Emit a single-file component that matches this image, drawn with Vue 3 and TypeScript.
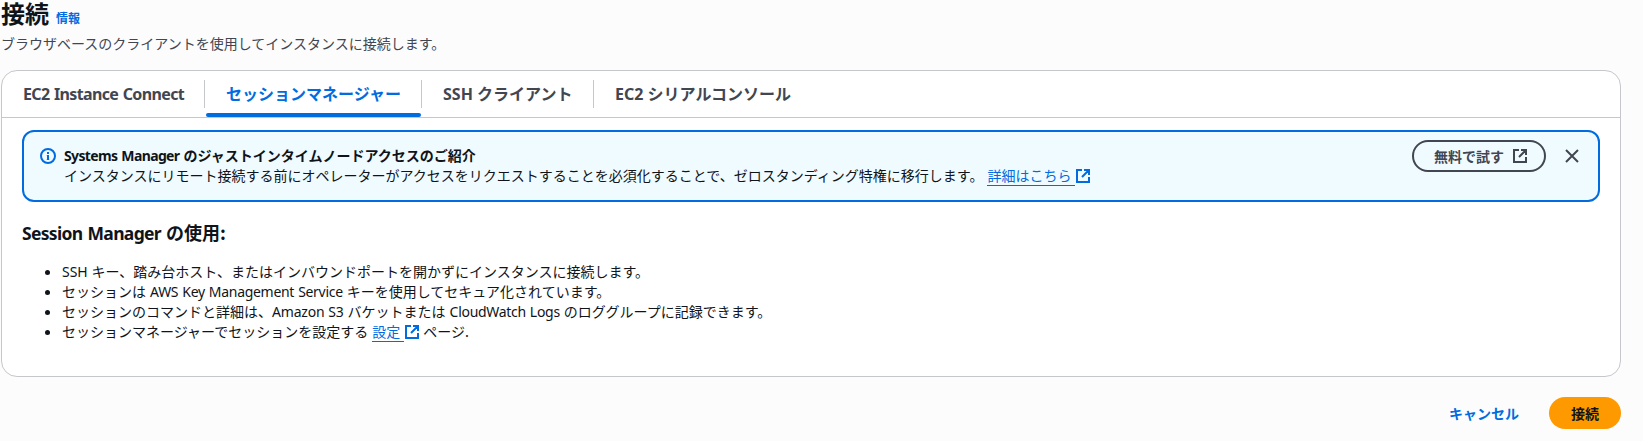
<script setup lang="ts">
import { ref } from 'vue'

interface Run { text: string; latin?: string }
interface Tab { id: string; runs: Run[] }

const tabs: Tab[] = [
  { id: 'eic', runs: [{ text: 'EC2 Instance Connect', latin: 'latin tight' }] },
  { id: 'ssm', runs: [{ text: 'セッションマネージャー' }] },
  { id: 'ssh', runs: [{ text: 'SSH ', latin: 'latin' }, { text: 'クライアント' }] },
  { id: 'serial', runs: [{ text: 'EC2 ', latin: 'latin' }, { text: 'シリアルコンソール' }] },
]
const active = ref('ssm')

const features: Run[][] = [
  [{ text: 'SSH ', latin: 'latin' }, { text: 'キー、踏み台ホスト、またはインバウンドポートを開かずにインスタンスに接続します。' }],
  [{ text: 'セッションは' }, { text: ' AWS Key Management Service ', latin: 'latin snug' }, { text: 'キーを使用してセキュア化されています。' }],
  [{ text: 'セッションのコマンドと詳細は、' }, { text: 'Amazon S3 ', latin: 'latin near' }, { text: 'バケットまたは' }, { text: ' CloudWatch Logs ', latin: 'latin snug' }, { text: 'のロググループに記録できます。' }],
]
</script>

<template>
  <main class="page">
    <header class="header">
      <div class="title-row">
        <h1>接続</h1>
        <a class="info">情報</a>
      </div>
      <p class="desc">ブラウザベースのクライアントを使用してインスタンスに接続します。</p>
    </header>

    <section class="panel">
      <nav class="tabs">
        <button v-for="t in tabs" :key="t.id" class="tab" :class="[t.id, { active: active === t.id }]" @click="active = t.id">
          <span class="tab-label"><span v-for="(r, i) in t.runs" :key="i" :class="r.latin">{{ r.text }}</span></span>
        </button>
      </nav>

      <div class="content">
        <div class="alert">
          <svg class="info-icon" viewBox="0 0 16 16">
            <circle cx="8" cy="8" r="7" />
            <path d="M8 12V7M8 4v2" />
            <path class="serif" d="M6.8 7.5H8M6.8 11.5h2.4" />
          </svg>
          <div class="alert-text">
            <strong><span class="latin tight">Systems Manager </span>のジャストインタイムノードアクセスのご紹介</strong>
            <p>インスタンスにリモート接続する前にオペレーターがアクセスをリクエストすることを必須化することで、ゼロスタンディング特権に移行します。<a class="link more">詳細はこちら</a><svg class="ext" viewBox="0 0 16 16"><path d="M14 9v5H2V2h5M9 2h5v5M7 9l6.5-6.5" /></svg></p>
          </div>
          <button class="try">無料で試す<svg class="ext" viewBox="0 0 16 16"><path d="M14 9v5H2V2h5M9 2h5v5M7 9l6.5-6.5" /></svg></button>
          <button class="close" aria-label="閉じる">
            <svg viewBox="0 0 16 16"><path d="M2 2l12 12M14 2L2 14" /></svg>
          </button>
        </div>

        <h3><span class="latin">Session Manager </span>の使用:</h3>
        <ul>
          <li v-for="(f, i) in features" :key="i"><span v-for="(r, j) in f" :key="j" :class="r.latin">{{ r.text }}</span></li>
          <li>セッションマネージャーでセッションを設定する<a class="link conf">設定</a><svg class="ext" viewBox="0 0 16 16"><path d="M14 9v5H2V2h5M9 2h5v5M7 9l6.5-6.5" /></svg><span class="after">ページ.</span></li>
        </ul>
      </div>
    </section>

    <footer class="actions">
      <button class="cancel">キャンセル</button>
      <button class="connect">接続</button>
    </footer>
  </main>
</template>

<style>
body { background: #fcfcfd; }
</style>

<style scoped>
.page {
  box-sizing: border-box;
  width: 1643px;
  height: 441px;
  padding: 0 22px 0 1px;
  overflow: hidden;
  background: #fcfcfd;
  color: #0f141a;
  font: 14px/20px "Noto Sans CJK JP", sans-serif;
}
.page * { box-sizing: border-box; }
h1, h3, p, ul { margin: 0; }
button { border: 0; background: none; padding: 0; font: inherit; color: inherit; }
svg { fill: none; stroke: currentColor; stroke-width: 2; display: block; }
.latin { font-family: "Noto Sans", sans-serif; white-space: pre; }
.tight { letter-spacing: -0.63px; word-spacing: 0.9px; }
.snug { letter-spacing: -0.3px; word-spacing: 0.7px; }
.near { letter-spacing: -0.2px; word-spacing: 0.5px; }

.header { height: 70px; }
.title-row { display: flex; height: 30px; }
h1 { font-size: 24px; line-height: 26px; font-weight: 700; }
.info { margin: 9px 0 0 7px; font-size: 12px; line-height: 18px; font-weight: 700; color: #006ce0; }
.desc { padding: 3px 0 0; color: #424650; }

.panel {
  height: 307px;
  border: 1px solid #c6c6cd;
  border-radius: 16px;
  background: #fff;
}
.tabs { display: flex; height: 47px; border-bottom: 1px solid #c6c6cd; }
.tab {
  display: flex;
  flex-direction: column;
  height: 46px;
  padding-top: 9px;
  font-size: 16px;
  font-weight: 700;
  color: #424650;
}
.tab-label { display: block; height: 28px; line-height: 27px; padding: 0 20px; border-right: 1px solid #c6c6cd; white-space: pre; text-align: left; }
.eic .tab-label { width: 203px; padding-left: 21px; }
.ssm .tab-label { width: 217px; padding-left: 21px; }
.ssh .tab-label { width: 172px; padding-left: 21px; }
.serial .tab-label { padding-left: 21px; border: 0; }
.tab.active { color: #006ce0; }
.tab.active::after { content: ""; width: 215px; height: 4px; margin: 5px 0 0 1px; border-radius: 2px; background: #006ce0; }

.content { padding: 12px 20px; }
.alert {
  display: flex;
  height: 72px;
  border: 2px solid #006ce0;
  border-radius: 12px;
  background: #f0fbff;
  padding: 8px 18px 0 16px;
}
.info-icon { width: 16px; height: 16px; margin-top: 8px; color: #006ce0; }
.serif { stroke-width: 1; }
.alert-text { flex: 1; padding: 6px 0 0 8px; line-height: 18px; }
.alert-text strong { display: block; height: 20px; }
.alert-text p { display: flex; height: 20px; white-space: nowrap; }
.link { color: #006ce0; border-bottom: 1px solid #006ce0; height: 20px; }
.more { width: 88px; margin-left: 4px; }
.ext { width: 16px; height: 16px; }
.alert-text .ext { color: #006ce0; margin-top: 2px; }
.try {
  display: flex;
  align-items: center;
  gap: 8px;
  width: 134px;
  height: 32px;
  padding-left: 20px;
  border: 2px solid #424650;
  border-radius: 16px;
  font-weight: 700;
  line-height: 18px;
  color: #424650;
}
.close { width: 16px; height: 16px; margin: 8px 0 0 18px; color: #424650; }

h3 { margin-top: 20px; height: 22px; font-size: 18px; line-height: 20px; font-weight: 700; }
h3 .latin { font-size: 17.5px; letter-spacing: -0.68px; word-spacing: 1.2px; }
ul { padding: 18px 0 0 40px; }
li { height: 20px; line-height: 18px; white-space: nowrap; }
li .link { display: inline-block; vertical-align: top; width: 32px; margin-left: 4px; }
li .ext { display: inline-block; vertical-align: top; margin-top: 2px; color: #006ce0; }
.after { margin-left: 3px; }

.actions { display: flex; justify-content: flex-end; margin-top: 20px; font-weight: 700; }
.cancel { margin-right: 30px; color: #006ce0; }
.connect { width: 72px; height: 32px; border-radius: 16px; background: #ff9900; color: #0f141a; }
</style>
